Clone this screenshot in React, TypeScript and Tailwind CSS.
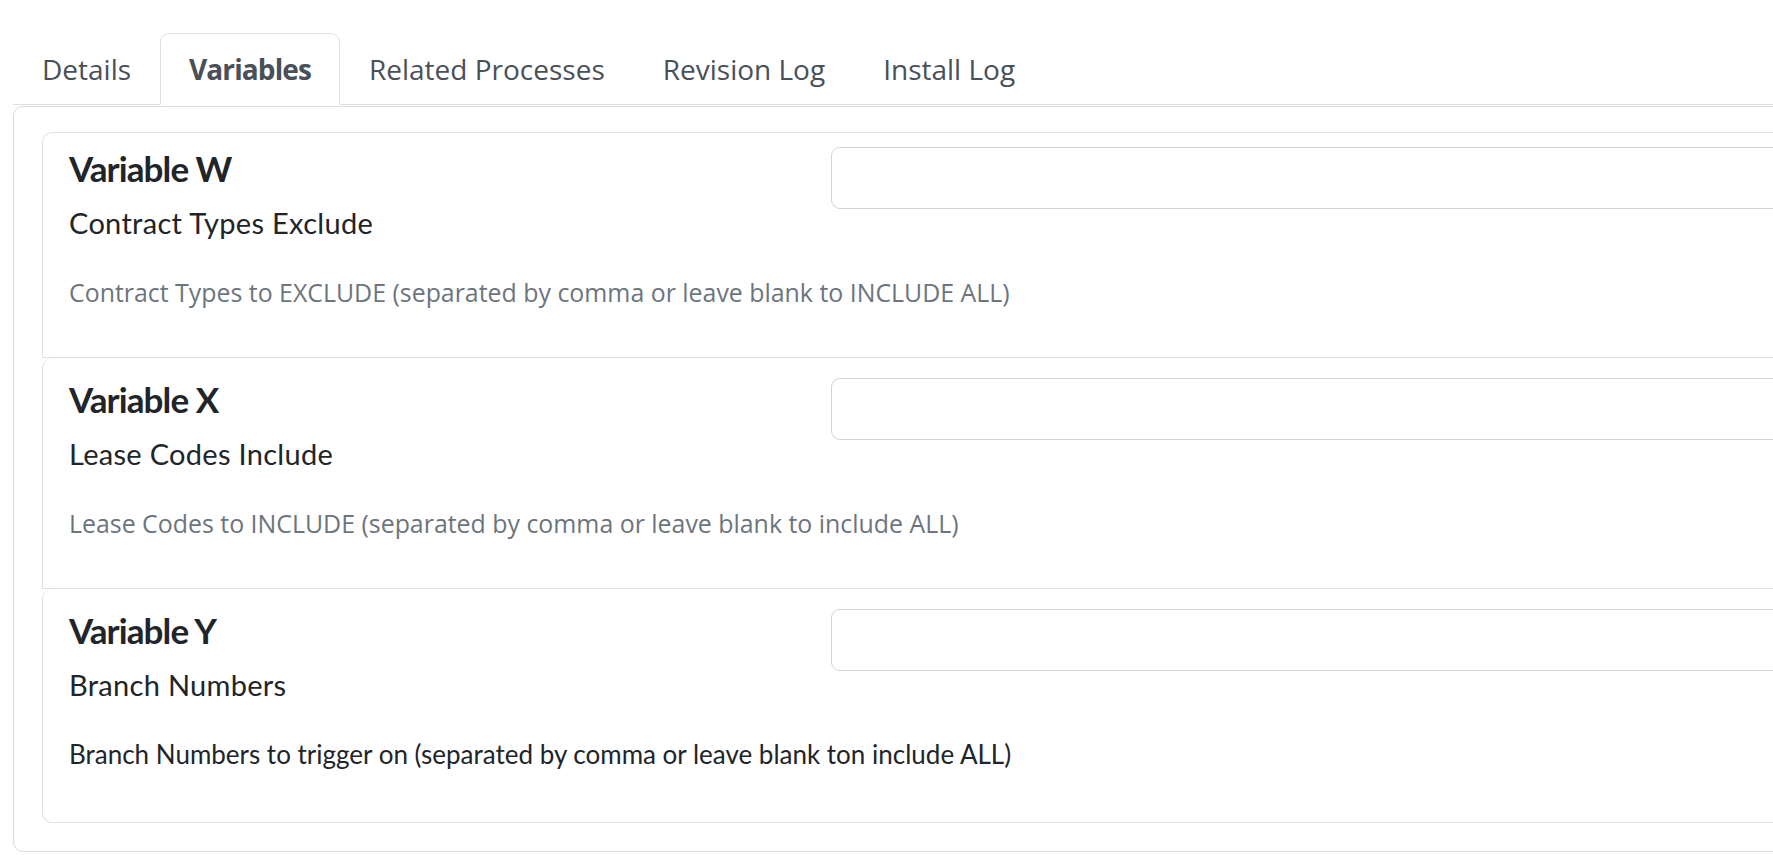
import React from "react";

const tabs = ["Details", "Variables", "Related Processes", "Revision Log", "Install Log"];

type Item = {
  title: string;
  label: string;
  help: string;
  dark?: boolean;
};

const items: Item[] = [
  {
    title: "Variable W",
    label: "Contract Types Exclude",
    help: "Contract Types to EXCLUDE (separated by comma or leave blank to INCLUDE ALL)",
  },
  {
    title: "Variable X",
    label: "Lease Codes Include",
    help: "Lease Codes to INCLUDE (separated by comma or leave blank to include ALL)",
  },
  {
    title: "Variable Y",
    label: "Branch Numbers",
    help: "Branch Numbers to trigger on (separated by comma or leave blank ton include ALL)",
    dark: true,
  },
];

function VarCard({ item, index }: { item: Item; index: number }) {
  const first = index === 0;
  const last = index === items.length - 1;
  const cls = first
    ? "border border-[#dfdfdf] rounded-t-[10px] pt-[14px] pb-[47px]"
    : last
    ? "border-x border-b border-[#dfdfdf] rounded-tl-[10px] rounded-b-[10px] pt-[20px] pb-[50px]"
    : "border-x border-b border-[#dfdfdf] rounded-tl-[10px] pt-[20px] pb-[47px]";
  return (
    <div className={`${cls} bg-white px-[14px]`}>
      <div className="flex items-start">
        <div className="w-[774px] shrink-0 pl-[12px]">
          <h5 className="text-[35px] leading-[42px] font-bold tracking-[-0.9px] text-[#212529] mb-[13px] font-['Lato',sans-serif]">
            {item.title}
          </h5>
          <div className="text-[29px] leading-[42px] tracking-[0.3px] text-[#212529] font-['Lato',sans-serif]">
            {item.label}
          </div>
        </div>
        <input
          type="text"
          className="flex-1 h-[62px] border border-[#ced4da] rounded-[9px] bg-white outline-none px-[21px] text-[28px]"
        />
      </div>
      {item.dark ? (
        <div className="pl-[12px] mt-[30px] whitespace-nowrap text-[26px] leading-[36px] text-[#212529] font-['Lato',sans-serif]">
          {item.help}
        </div>
      ) : (
        <div className="pl-[12px] mt-[30px] whitespace-nowrap text-[24.9px] leading-[36px] text-[#6c757d] font-['Open_Sans',sans-serif]">
          {item.help}
        </div>
      )}
    </div>
  );
}

export default function App() {
  return (
    <div className="w-full h-[855px] overflow-hidden bg-white">
      <div className="w-[1950px] pl-[13px] pt-[33px]">
        <ul className="flex border-b border-[#dee2e6] font-['Open_Sans',sans-serif]">
          {tabs.map((t) => {
            const active = t === "Variables";
            return (
              <li
                key={t}
                className={
                  active
                    ? "mb-[-1px] border border-[#dee2e6] border-b-white bg-white rounded-t-[9px] px-[28px] py-[14px] text-[28px] leading-[42px] font-bold tracking-[-0.9px] text-[#495057]"
                    : "mb-[-1px] border border-transparent rounded-t-[9px] px-[28px] py-[14px] text-[28px] leading-[42px] text-[#495057]"
                }
              >
                {t}
              </li>
            );
          })}
        </ul>
        <div className="mt-[1px] border border-[#dcdcdc] rounded-[10px] pt-[25px] pb-[28px] px-[28px]">
          {items.map((it, i) => (
            <VarCard key={it.title} item={it} index={i} />
          ))}
        </div>
      </div>
    </div>
  );
}
